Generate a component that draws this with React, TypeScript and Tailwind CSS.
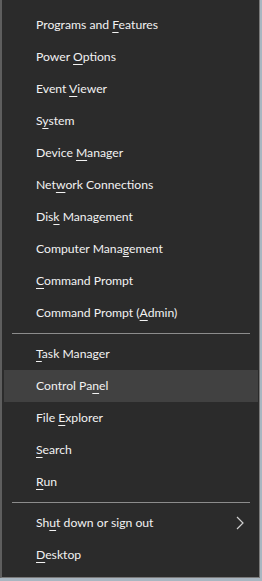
import React from "react";

type Item = { pre: string; key: string; post: string; sub?: boolean; active?: boolean };

// Win+X menu entries, grouped by separators
const groups: Item[][] = [
  [
    { pre: "Programs and ", key: "F", post: "eatures" },
    { pre: "Power ", key: "O", post: "ptions" },
    { pre: "Event ", key: "V", post: "iewer" },
    { pre: "S", key: "y", post: "stem" },
    { pre: "Device ", key: "M", post: "anager" },
    { pre: "Net", key: "w", post: "ork Connections" },
    { pre: "Dis", key: "k", post: " Management" },
    { pre: "Computer Mana", key: "g", post: "ement" },
    { pre: "", key: "C", post: "ommand Prompt" },
    { pre: "Command Prompt (", key: "A", post: "dmin)" },
  ],
  [
    { pre: "", key: "T", post: "ask Manager" },
    { pre: "Control Pa", key: "n", post: "el", active: true },
    { pre: "File ", key: "E", post: "xplorer" },
    { pre: "", key: "S", post: "earch" },
    { pre: "", key: "R", post: "un" },
  ],
  [
    { pre: "Sh", key: "u", post: "t down or sign out", sub: true },
    { pre: "", key: "D", post: "esktop" },
  ],
];

function Row({ item }: { item: Item }) {
  return (
    <div
      className={
        "h-8 ml-[2px] mr-px pl-[32px] pr-3 flex items-center justify-between " +
        (item.active ? "bg-[#414141]" : "")
      }
    >
      <span className="text-[12.2px] text-[#f2f2f2] leading-none">
        {item.pre}
        <span className="underline underline-offset-[3px] decoration-1">{item.key}</span>
        {item.post}
      </span>
      {item.sub && (
        <svg width="8" height="14" viewBox="0 0 8 14" className="mr-[2px]">
          <path d="M1 1 L7 7 L1 13" fill="none" stroke="#cfcfcf" strokeWidth="1.2" />
        </svg>
      )}
    </div>
  );
}

export default function App() {
  return (
    <div
      className="w-[262px] h-[581px] bg-[#a9b6c1] overflow-hidden"
      style={{ fontFamily: 'Lato, "Noto Sans", sans-serif' }}
    >
      <div className="w-[260px] h-[578px] bg-[#2b2b2b] border-l-2 border-r border-b border-l-[#5e5e5e] border-r-[#7a7a7a] border-b-[#7a7a7a] pt-[9px] flex flex-col">
        {groups.map((g, gi) => (
          <div key={gi}>
            {gi > 0 && (
              <div className="h-[9px] flex items-center">
                <div className="ml-[10px] w-[238px] h-px bg-[#8c8c8c]" />
              </div>
            )}
            {g.map((it, i) => (
              <Row key={i} item={it} />
            ))}
          </div>
        ))}
      </div>
    </div>
  );
}
